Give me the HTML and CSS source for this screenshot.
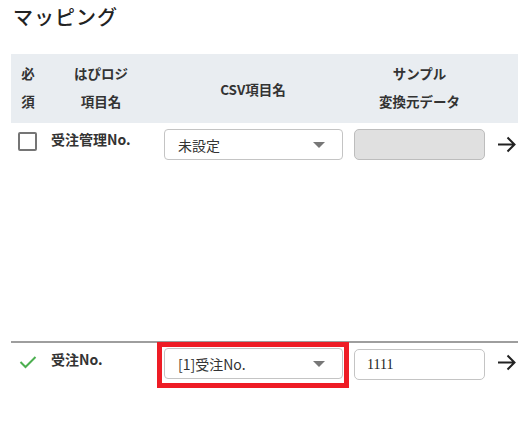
FILE: index.html
```html
<!DOCTYPE html>
<html lang="ja">
<head>
<meta charset="utf-8">
<link rel="stylesheet" href="styles.css">
</head>
<body>
<div class="page">
  <h1 class="title">マッピング</h1>
  <div class="table">
    <div class="head">
      <div class="hcell c1"><span>必</span><span>須</span></div>
      <div class="hcell c2"><span>はぴロジ</span><span>項目名</span></div>
      <div class="hcell c3"><span>CSV項目名</span></div>
      <div class="hcell c4"><span>サンプル</span><span>変換元データ</span></div>
      <div class="hcell c5"></div>
    </div>
    <div class="row row-tall">
      <div class="cell c1"><span class="checkbox"></span></div>
      <div class="cell c2 label">受注管理No.</div>
      <div class="cell c3">
        <div class="select"><span class="sel-text">未設定</span><span class="caret"></span></div>
      </div>
      <div class="cell c4"><div class="input disabled"></div></div>
      <div class="cell c5">
        <svg class="arrow" width="20" height="17" viewBox="0 0 20 17"><path d="M1 8.5H18M10.5 1.5L17.5 8.5L10.5 15.5" fill="none" stroke="#222" stroke-width="2"/></svg>
      </div>
    </div>
    <div class="row">
      <div class="cell c1">
        <svg class="check" width="18" height="14" viewBox="0 0 18 14"><path d="M1.5 7L6.5 12L16.5 2" fill="none" stroke="#4caf50" stroke-width="2"/></svg>
      </div>
      <div class="cell c2 label">受注No.</div>
      <div class="cell c3">
        <div class="highlight">
          <div class="select"><span class="sel-text">[1]受注No.</span><span class="caret"></span></div>
        </div>
      </div>
      <div class="cell c4"><div class="input"><span class="val">1111</span></div></div>
      <div class="cell c5">
        <svg class="arrow" width="20" height="17" viewBox="0 0 20 17"><path d="M1 8.5H18M10.5 1.5L17.5 8.5L10.5 15.5" fill="none" stroke="#222" stroke-width="2"/></svg>
      </div>
    </div>
  </div>
</div>
</body>
</html>
```

FILE: styles.css
```css
* { box-sizing: border-box; }
html, body { margin: 0; padding: 0; background: #fff; }
body {
  font-family: "Noto Sans CJK JP", "Noto Sans", sans-serif;
  color: #333;
  width: 518px;
  overflow: hidden;
}
.page { padding-left: 11px; }
.title {
  margin: 0;
  padding: 3px 0 0 2px;
  height: 54px;
  font-size: 20px;
  font-weight: 500;
  line-height: 28px;
  color: #222;
  letter-spacing: 1px;
}
.table { width: 520px; }
.head, .row {
  display: grid;
  grid-template-columns: 34px 112px 192px 141px 28px;
}
.head {
  background: #e9edf1;
  height: 69px;
  padding-top: 5px;
}
.hcell {
  display: flex;
  flex-direction: column;
  align-items: center;
  justify-content: flex-start;
  font-size: 13.5px;
  font-weight: 700;
  line-height: 28px;
  color: #333;
}
.hcell.c3 { justify-content: center; padding-bottom: 5px; }
.row { border-bottom: 2px solid #9e9e9e; }
.row-tall { height: 220px; }
.row:last-child { border-bottom: none; }
.cell { padding-top: 6px; }
.cell.c1 { display: flex; justify-content: center; padding-top: 9px; padding-right: 2px; }
.checkbox {
  display: block;
  width: 19px;
  height: 19px;
  border: 2px solid #757575;
  border-radius: 2px;
}
.check { margin-top: 3px; margin-left: 1px; }
.label {
  font-size: 14px;
  font-weight: 700;
  padding-left: 6px;
  padding-top: 7px;
  line-height: 18px;
  color: #333;
}
.cell.c3 { padding-left: 7px; padding-right: 6px; }
.select {
  height: 31px;
  border: 1px solid #c4c4c4;
  border-radius: 4px;
  display: flex;
  align-items: center;
  justify-content: space-between;
  padding: 0 17px 0 13px;
  background: #fff;
}
.sel-text { font-size: 14px; color: #333; }
.caret {
  width: 0; height: 0;
  border-left: 6px solid transparent;
  border-right: 6px solid transparent;
  border-top: 6px solid #777;
}
.highlight {
  margin: -7px -6px 0 -7px;
  border: 5px solid #ee1c25;
  padding: 1px 1px 4px 2px;
}
.cell.c4 { padding-left: 5px; padding-right: 5px; }
.input {
  height: 31px;
  border: 1px solid #c4c4c4;
  border-radius: 5px;
  display: flex;
  align-items: center;
  padding-left: 12px;
}
.input.disabled { background: #e0e0e0; border-color: #bdbdbd; }
.val { font-family: "Liberation Serif", serif; font-size: 14px; color: #222; }
.cell.c5 { padding-left: 7px; padding-top: 11px; }
.row:last-child .cell.c5 { padding-top: 9px; }
```
